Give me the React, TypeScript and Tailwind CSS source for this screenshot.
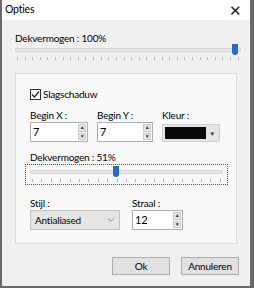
import { ChevronDown } from 'lucide-react'

const font = { fontFamily: 'Lato, "Liberation Sans", sans-serif' }

function Ticks({ count }: { count: number }) {
  return (
    <div className="flex justify-between px-[2px]">
      {Array.from({ length: count }).map((_, i) => (
        <div key={i} className="w-px h-[3px] bg-[#b8b8b8]" />
      ))}
    </div>
  )
}

function Slider({ pos, ticks }: { pos: number; ticks: number }) {
  return (
    <div className="flex flex-col gap-[2px]">
      <div className="relative h-[11px] flex items-center">
        <div className="w-full h-[4px] bg-[#e7e7e7] border border-[#d6d6d6]" />
        <div
          className="absolute top-0 w-[6px] h-[11px] bg-[#1e6fc8] rounded-b-[3px]"
          style={{ left: `${pos}%` }}
        />
      </div>
      <Ticks count={ticks} />
    </div>
  )
}

function Spinner({ value, width }: { value: string; width: string }) {
  return (
    <div className={`${width} h-[20px] flex bg-white border border-[#adadad]`}>
      <div className="flex-1 pl-[2px] text-[11px] leading-[18px] text-black">{value}</div>
      <div className="flex flex-col w-[10px] gap-px p-px">
        <div className="flex-1 bg-[#e6e6e6] border border-[#c8c8c8] flex items-center justify-center text-[5px] leading-none text-[#333]">▲</div>
        <div className="flex-1 bg-[#e6e6e6] border border-[#c8c8c8] flex items-center justify-center text-[5px] leading-none text-[#333]">▼</div>
      </div>
    </div>
  )
}

export default function App() {
  return (
    <div
      className="w-[254px] h-[288px] flex flex-col bg-[#f0f0f0] border-l-2 border-r-4 border-b-2 border-[#6a6a6a] text-[10px] tracking-[-0.2px] text-black"
      style={font}
    >
      <div className="h-[20px] shrink-0 bg-white flex items-center justify-between pl-[3px] pr-[8px]">
        <span className="text-[10.5px]">Opties</span>
        <span className="text-[15px] font-light leading-none text-[#222]">✕</span>
      </div>

      <div className="flex flex-col pl-[13px] pr-[9px] pt-[10px]">
        <div className="leading-[16px]">Dekvermogen : 100%</div>
        <div className="-mt-[2px]">
          <Slider pos={96} ticks={30} />
        </div>
      </div>

      <div className="mx-[13px] mt-[13px] h-[171px] shrink-0 border border-[#dcdcdc] bg-[#f8f8f8] flex flex-col pl-[14px] pr-[13px] pt-[12px]">
        <label className="flex items-center gap-[2px] leading-[16px]">
          <span className="w-[11px] h-[11px] border border-[#333] bg-white flex items-center justify-center">
            <svg width="9" height="9" viewBox="0 0 9 9">
              <path d="M1 4.5 L3.5 7 L8 1.5" fill="none" stroke="#222" strokeWidth="1.2" />
            </svg>
          </span>
          <span>Slagschaduw</span>
        </label>

        <div className="flex gap-[9px] mt-[7px]">
          <div className="flex flex-col">
            <span className="leading-[13px]">Begin X :</span>
            <Spinner value="7" width="w-[58px]" />
          </div>
          <div className="flex flex-col">
            <span className="leading-[13px]">Begin Y :</span>
            <Spinner value="7" width="w-[56px]" />
          </div>
          <div className="flex flex-col">
            <span className="leading-[13px]">Kleur :</span>
            <div className="w-[58px] h-[18px] mt-[2px] flex items-center gap-px p-[2px] bg-[#e5e5e5] border border-[#cfcfcf]">
              <div className="flex-1 h-full bg-[#0a0a0a]" />
              <div className="w-[10px] flex items-center justify-center text-[6px] text-[#333]">▼</div>
            </div>
          </div>
        </div>

        <div className="mt-[9px] leading-[13px]">Dekvermogen : 51%</div>
        <div className="-mx-[5px] border border-dotted border-[#555] px-[4px] pt-px pb-[2px]">
          <Slider pos={43} ticks={21} />
        </div>

        <div className="flex gap-[12px] mt-[12px]">
          <div className="flex flex-col">
            <span className="leading-[13px]">Stijl :</span>
            <div className="w-[90px] h-[20px] bg-[#e5e5e5] border border-[#c4c4c4] flex items-center justify-between pl-[4px] pr-[3px]">
              <span>Antialiased</span>
              <ChevronDown size={10} strokeWidth={1.5} className="text-[#555]" />
            </div>
          </div>
          <div className="flex flex-col">
            <span className="leading-[13px]">Straal :</span>
            <Spinner value="12" width="w-[51px]" />
          </div>
        </div>
      </div>

      <div className="flex justify-end gap-[11px] pr-[11px] mt-[13px]">
        <button className="w-[58px] h-[18px] bg-[#e1e1e1] border border-[#adadad] leading-none">Ok</button>
        <button className="w-[58px] h-[18px] bg-[#e1e1e1] border border-[#adadad] leading-none">Annuleren</button>
      </div>
    </div>
  )
}
